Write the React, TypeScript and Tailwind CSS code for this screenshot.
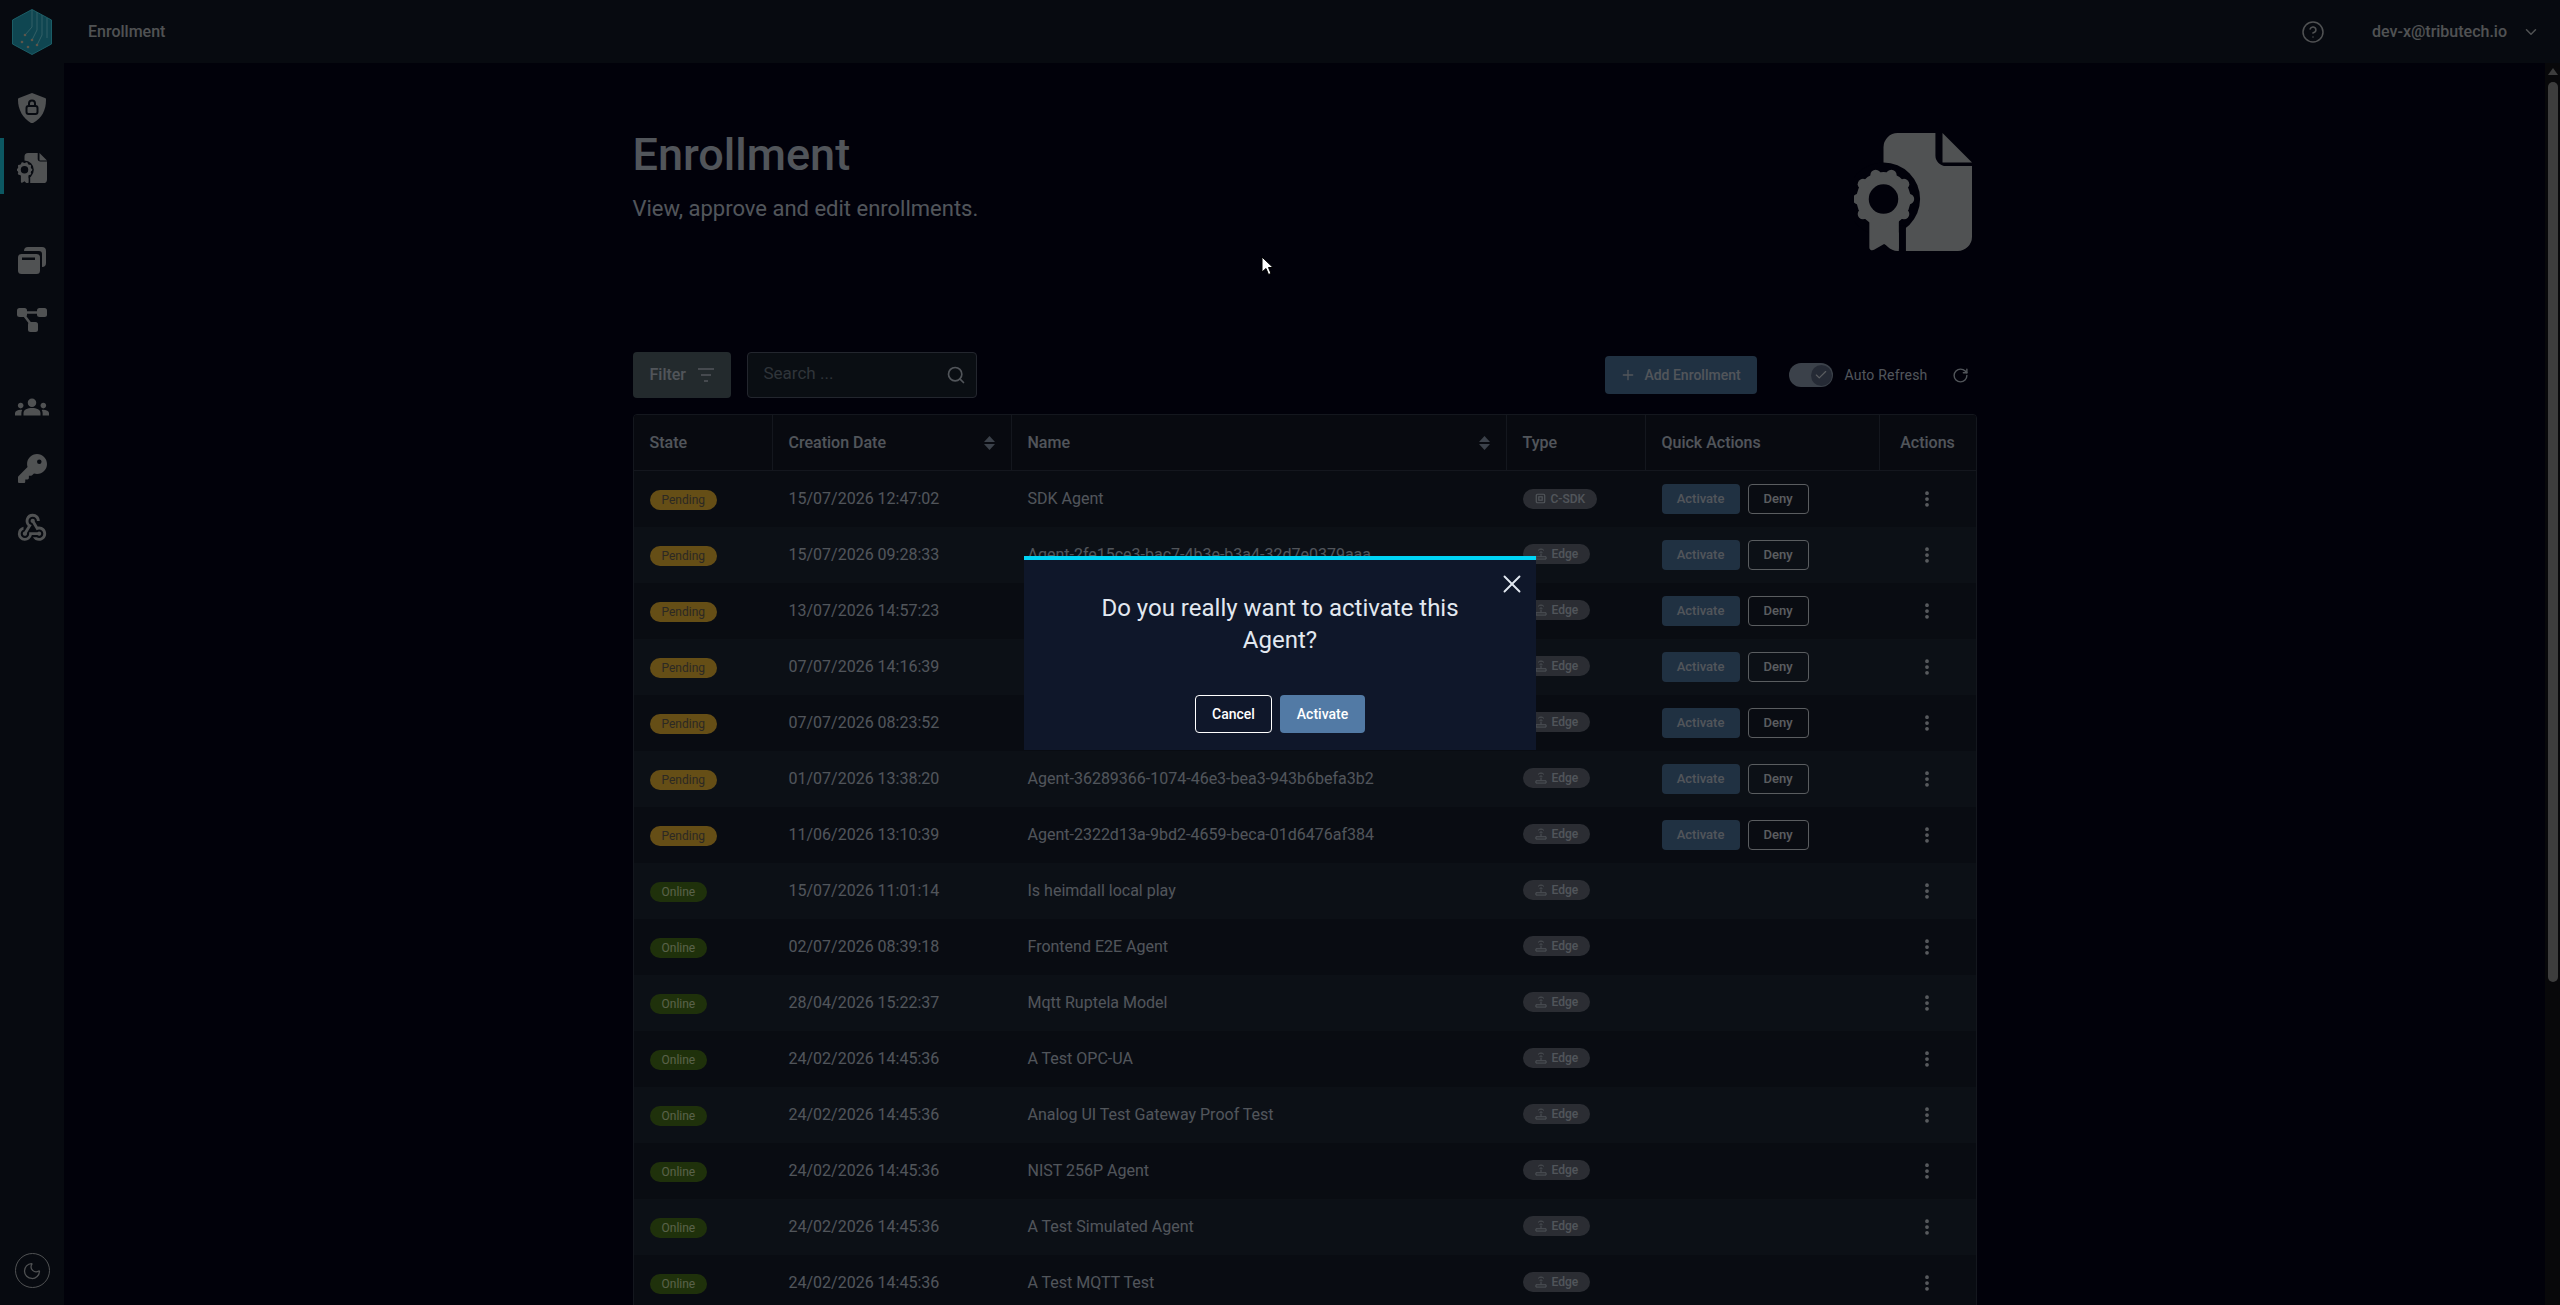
import { Check, ChevronDown, CircleHelp, Moon, MoreVertical, Plus, RotateCw, Search, X } from "lucide-react";
import { FaKey } from "react-icons/fa6";
import { MdGroups, MdWebhook } from "react-icons/md";

type Row = {
  state: "Pending" | "Online";
  date: string;
  name: string;
  type: "C-SDK" | "Edge";
};

const ROWS: Row[] = [
  { state: "Pending", date: "15/07/2026 12:47:02", name: "SDK Agent", type: "C-SDK" },
  { state: "Pending", date: "15/07/2026 09:28:33", name: "Agent-2fe15ce3-bac7-4b3e-b3a4-32d7e0379aaa", type: "Edge" },
  { state: "Pending", date: "13/07/2026 14:57:23", name: "Agent-8c41d7a2-51fe-4a0b-9c33-7be20d1f6a10", type: "Edge" },
  { state: "Pending", date: "07/07/2026 14:16:39", name: "Agent-b07e93c1-2d64-4f18-a7c5-06d1c8e4f2b7", type: "Edge" },
  { state: "Pending", date: "07/07/2026 08:23:52", name: "Agent-61a2f0de-93b7-48c6-8e21-f4a97c3d05e8", type: "Edge" },
  { state: "Pending", date: "01/07/2026 13:38:20", name: "Agent-36289366-1074-46e3-bea3-943b6befa3b2", type: "Edge" },
  { state: "Pending", date: "11/06/2026 13:10:39", name: "Agent-2322d13a-9bd2-4659-beca-01d6476af384", type: "Edge" },
  { state: "Online", date: "15/07/2026 11:01:14", name: "Is heimdall local play", type: "Edge" },
  { state: "Online", date: "02/07/2026 08:39:18", name: "Frontend E2E Agent", type: "Edge" },
  { state: "Online", date: "28/04/2026 15:22:37", name: "Mqtt Ruptela Model", type: "Edge" },
  { state: "Online", date: "24/02/2026 14:45:36", name: "A Test OPC-UA", type: "Edge" },
  { state: "Online", date: "24/02/2026 14:45:36", name: "Analog UI Test Gateway Proof Test", type: "Edge" },
  { state: "Online", date: "24/02/2026 14:45:36", name: "NIST 256P Agent", type: "Edge" },
  { state: "Online", date: "24/02/2026 14:45:36", name: "A Test Simulated Agent", type: "Edge" },
  { state: "Online", date: "24/02/2026 14:45:36", name: "A Test MQTT Test", type: "Edge" },
];

const GRID = "grid grid-cols-[139px_239px_495px_139px_234px_1fr]";

function Logo() {
  return (
    <svg width="40" height="46" viewBox="0 0 40 46" fill="none">
      <polygon points="20,0.500 39.500,11 39.500,35 20,45.500 0.500,35 0.500,11" fill="#26aeca" stroke="#45e8ff" strokeWidth="1" />
      <path d="M20 1v17l-7 8M25 3v18l-5 10M30 6v20l-5 10M35 9v20" stroke="#7feeff" strokeWidth="1" />
      <circle cx="10" cy="33" r="1.300" fill="#e8d8b8" />
      <circle cx="13" cy="26" r="1.300" fill="#e8d8b8" />
      <circle cx="16" cy="38" r="1.300" fill="#e8d8b8" />
      <circle cx="25" cy="36" r="1.300" fill="#e8d8b8" />
      <circle cx="20" cy="31" r="1.300" fill="#e8d8b8" />
    </svg>
  );
}

function ShieldIcon() {
  return (
    <svg width="28" height="30" viewBox="0 0 28 30">
      <path d="M14 0 27 5c1 .4 1 1 1 2 0 10-4 18-13 23-.7.3-1.3.3-2 0C5 25 0 17 0 7c0-1 0-1.600 1-2z" fill="currentColor" />
      <rect x="8.500" y="13" width="11" height="8" rx="2" fill="none" stroke="#121a28" strokeWidth="2" />
      <path d="M11 13v-2.500a3 3 0 0 1 6 0V13" fill="none" stroke="#121a28" strokeWidth="2" />
    </svg>
  );
}

// the document with a rosette, used both in the sidebar and in the page head
function CertificateIcon({ size, cut }: { size: number; cut: string }) {
  const bumps = Array.from({ length: 10 }, (_, i) => (i * Math.PI) / 5);
  return (
    <svg width={size} height={size} viewBox="0 0 100 100">
      <path
        d="M37 0H69V19a9 9 0 0 0 9 9H100V88a12 12 0 0 1-12 12H37a12 12 0 0 1-12-12V12A12 12 0 0 1 37 0z"
        fill="currentColor"
      />
      <path d="M75 0 100 25H75z" fill="currentColor" />
      <circle cx="25" cy="56" r="31" fill={cut} />
      <rect x="38" y="78" width="6" height="22" fill={cut} />
      <path d="M13 70H38V97c0 2-2 3-4 2l-8.500-5-8.500 5c-2 1-4 0-4-2z" fill="currentColor" />
      <circle cx="25" cy="56" r="23" fill="currentColor" />
      {bumps.map((a) => (
        <circle key={a} cx={25 + 21.500 * Math.cos(a)} cy={56 + 21.500 * Math.sin(a)} r="4.500" fill="currentColor" />
      ))}
      <circle cx="25" cy="56" r="12.500" fill={cut} />
    </svg>
  );
}

function CardsIcon() {
  return (
    <svg width="28" height="27" viewBox="0 0 28 27">
      <path d="M10 0h14a4 4 0 0 1 4 4v12a4 4 0 0 1-4 4V7a3 3 0 0 0-3-3H6a4 4 0 0 1 4-4z" fill="currentColor" />
      <rect x="0" y="7" width="22" height="20" rx="3.500" fill="currentColor" />
      <rect x="4" y="10.500" width="13" height="2.500" fill="#121a28" />
    </svg>
  );
}

function NodesIcon() {
  return (
    <svg width="30" height="24" viewBox="0 0 30 24">
      <path d="M5 4.500H25M5 4.500 16 19" stroke="currentColor" strokeWidth="2.500" fill="none" />
      <rect x="0" y="0" width="10" height="9" rx="2.500" fill="currentColor" />
      <rect x="20" y="0" width="10" height="9" rx="2.500" fill="currentColor" />
      <rect x="11" y="14" width="10" height="10" rx="2.500" fill="currentColor" />
    </svg>
  );
}

function SortIcon() {
  return (
    <svg width="11" height="14" viewBox="0 0 11 14" fill="#94a3b8">
      <path d="M5.500 0 11 6H0z" />
      <path d="M5.500 14 0 8h11z" />
    </svg>
  );
}

function FilterIcon() {
  return (
    <svg width="16" height="14" viewBox="0 0 16 14" stroke="#cbd5e1" strokeWidth="1.500">
      <path d="M0 1h16M3 7h10M6 13h4" />
    </svg>
  );
}

function EdgeIcon() {
  return (
    <svg width="12" height="12" viewBox="0 0 13 13" fill="none" stroke="currentColor" strokeWidth="1">
      <path d="M3.500 2.500a4 4 0 0 1 6 0M5 5a2 2 0 0 1 3 0" />
      <path d="M6.500 6v3M1 9.500h11v2.500H1z" />
    </svg>
  );
}

function ChipIcon() {
  return (
    <svg width="11" height="11" viewBox="0 0 13 13" fill="none" stroke="currentColor" strokeWidth="1.400">
      <rect x="1.500" y="1.500" width="10" height="10" rx="1.500" />
      <rect x="4.500" y="4.500" width="4" height="4" />
    </svg>
  );
}

function StateBadge({ state }: { state: Row["state"] }) {
  const pending = state === "Pending";
  return (
    <span
      className={`inline-flex h-5 items-center rounded-full px-3 text-xs ${
        pending ? "bg-[#fcc238] text-[#6f6757]" : "bg-[#4f7a1c] text-[#dff2b8]"
      }`}
    >
      {state}
    </span>
  );
}

function TypeBadge({ type }: { type: Row["type"] }) {
  return (
    <span className="inline-flex h-5 items-center gap-[5px] rounded-full bg-[#6b7280] px-3 text-xs font-medium text-[#cbd5e1]">
      {type === "C-SDK" ? <ChipIcon /> : <EdgeIcon />}
      {type}
    </span>
  );
}

function HeaderCell({ label, sort }: { label: string; sort?: boolean }) {
  return (
    <div className="flex items-center justify-between border-r border-[#333a4b] px-4">
      <span className="text-base font-medium">{label}</span>
      {sort && <SortIcon />}
    </div>
  );
}

function TableRow({ row, odd }: { row: Row; odd: boolean }) {
  return (
    <div className={`${GRID} h-14 items-center ${odd ? "bg-[#1e2837]" : "bg-[#171e2d]"}`}>
      <div className="pl-4">
        <StateBadge state={row.state} />
      </div>
      <div className="pl-4 text-base">{row.date}</div>
      <div className="pl-4 text-base">{row.name}</div>
      <div className="pl-4">
        <TypeBadge type={row.type} />
      </div>
      <div className="flex items-center gap-2 pl-4">
        {row.state === "Pending" && (
          <>
            <button className="h-[30px] w-[78px] rounded-[4px] bg-[#527aa5] text-[13px] font-medium text-[#cbd5e1]">
              Activate
            </button>
            <button className="h-[30px] w-[61px] rounded-[4px] border border-[#e2e8f0] text-[13px] font-medium text-[#e2e8f0]">
              Deny
            </button>
          </>
        )}
      </div>
      <div className="flex justify-center pr-px">
        <MoreVertical size={20} strokeWidth={2.500} className="text-[#e2e8f0]" />
      </div>
    </div>
  );
}

function Sidebar() {
  return (
    <aside className="flex w-16 shrink-0 flex-col items-center bg-[#121a28] text-[#c8ccd0]">
      <div className="mt-[30px]">
        <ShieldIcon />
      </div>
      <div className="relative mt-[30px] flex w-full justify-center">
        <span className="absolute left-0 top-[-15px] h-14 w-1 bg-[#1fdcf5]" />
        <CertificateIcon size={30} cut="#121a28" />
      </div>
      <div className="mt-[64px]">
        <CardsIcon />
      </div>
      <div className="mt-[34px]">
        <NodesIcon />
      </div>
      <div className="mt-[58px]">
        <MdGroups size={34} />
      </div>
      <div className="mt-[30px]">
        <FaKey size={29} />
      </div>
      <div className="mt-[28px]">
        <MdWebhook size={34} />
      </div>
      <div className="mt-auto mb-[17px] flex h-[35px] w-[35px] items-center justify-center rounded-full border border-[#c8ccd0]">
        <Moon size={20} strokeWidth={1.500} />
      </div>
    </aside>
  );
}

function Topbar() {
  return (
    <header className="flex h-[63px] shrink-0 items-center bg-[#121a28] text-[#c8ccd0]">
      <div className="ml-3 mt-[1px]">
        <Logo />
      </div>
      <span className="ml-9 text-base font-medium">Enrollment</span>
      <div className="ml-auto mr-[20px] flex items-center">
        <CircleHelp size={24} strokeWidth={1.500} />
        <span className="ml-[47px] text-base font-medium">dev-x@tributech.io</span>
        <ChevronDown size={18} className="ml-[15px]" />
      </div>
    </header>
  );
}

function ConfirmDialog() {
  return (
    <div className="absolute inset-0 flex justify-center bg-black/60">
      <div className="relative mt-[556px] h-[194px] w-[512px] border-t-4 border-[#00d4f5] bg-[#0f172a] pt-8 text-[#e2e8f0]">
        <button className="absolute right-[9px] top-[9px]">
          <X size={30} strokeWidth={1.500} />
        </button>
        <p className="mx-auto w-[400px] text-center text-2xl leading-8 font-normal">
          Do you really want to activate this Agent?
        </p>
        <div className="mt-[39px] flex justify-center gap-2">
          <button className="h-[38px] w-[77px] rounded-[4px] border border-white text-sm font-medium text-white">Cancel</button>
          <button className="h-[38px] w-[85px] rounded-[4px] bg-[#527aa5] text-sm font-medium text-white">Activate</button>
        </div>
      </div>
      <svg className="absolute left-[1261px] top-[256px]" width="13" height="20" viewBox="0 0 13 20">
        <path d="M1 1v15l4-3.500 2.500 6 2.500-1-2.500-6H12z" fill="#fff" stroke="#000" strokeWidth="1" />
      </svg>
    </div>
  );
}

export default function App() {
  return (
    <div className="relative flex h-screen flex-col overflow-hidden bg-[#030319] font-['Roboto',sans-serif] text-[#cbd5e1]">
      <Topbar />
      <div className="flex min-h-0 flex-1">
        <Sidebar />
        <main className="min-w-0 flex-1 overflow-hidden">
          <div className="mx-auto w-[1344px] pt-16">
            <div className="flex h-[225px] justify-between">
              <div>
                <h1 className="text-[45px] leading-[56px] font-medium">Enrollment</h1>
                <p className="mt-[10px] text-[22px] leading-8">View, approve and edit enrollments.</p>
              </div>
              <div className="mr-[5px] mt-[6px] text-[#c8ccd0]">
                <CertificateIcon size={118} cut="#030319" />
              </div>
            </div>

            <div className="flex h-[46px] items-center">
              <button className="flex h-[46px] w-[98px] items-center gap-3 rounded-[4px] bg-[#586a70] pl-[17px] text-base font-medium">
                Filter
                <FilterIcon />
              </button>
              <div className="ml-4 flex h-[46px] w-[230px] items-center justify-between rounded-[4px] border border-[#585f73] bg-[#1b2330] pl-4 pr-[10px] text-[#75828f]">
                <span className="-mt-0.5 text-[17px]">Search ...</span>
                <Search size={20} className="text-[#cbd5e1]" />
              </div>
              <button className="ml-auto flex h-[38px] w-[152px] items-center justify-center gap-2 rounded-[4px] bg-[#527aa5] text-sm font-medium">
                <Plus size={16} />
                Add Enrollment
              </button>
              <div className="ml-8 flex h-6 w-11 items-center justify-end rounded-full bg-[#94a3b8] pr-[1px]">
                <span className="flex h-[21px] w-[21px] items-center justify-center rounded-full bg-[#5d6985]">
                  <Check size={14} strokeWidth={2} className="text-[#e2e8f0]" />
                </span>
              </div>
              <span className="ml-3 text-sm tracking-[0.2px]">Auto Refresh</span>
              <RotateCw size={17} className="ml-[24px] mr-2" />
            </div>

            <div className="mt-4 overflow-hidden rounded-t-[4px] border border-[#333a4b]">
              <div className={`${GRID} h-14 border-b border-[#333a4b] bg-[#161b28]`}>
                <HeaderCell label="State" />
                <HeaderCell label="Creation Date" sort />
                <HeaderCell label="Name" sort />
                <HeaderCell label="Type" />
                <HeaderCell label="Quick Actions" />
                <div className="flex items-center justify-center text-base font-medium">Actions</div>
              </div>
              {ROWS.map((row, index) => (
                <TableRow key={row.name} row={row} odd={index % 2 === 1} />
              ))}
            </div>
          </div>
        </main>
        <div className="relative w-[15px] shrink-0 bg-[#16161a]">
          <svg className="absolute left-[3px] top-[5px]" width="10" height="7" viewBox="0 0 10 7" fill="#999">
            <path d="M5 0l5 7H0z" />
          </svg>
          <div className="absolute left-[3px] top-[19px] h-[900px] w-[10px] rounded-full bg-[#999]" />
        </div>
      </div>
      <ConfirmDialog />
    </div>
  );
}
